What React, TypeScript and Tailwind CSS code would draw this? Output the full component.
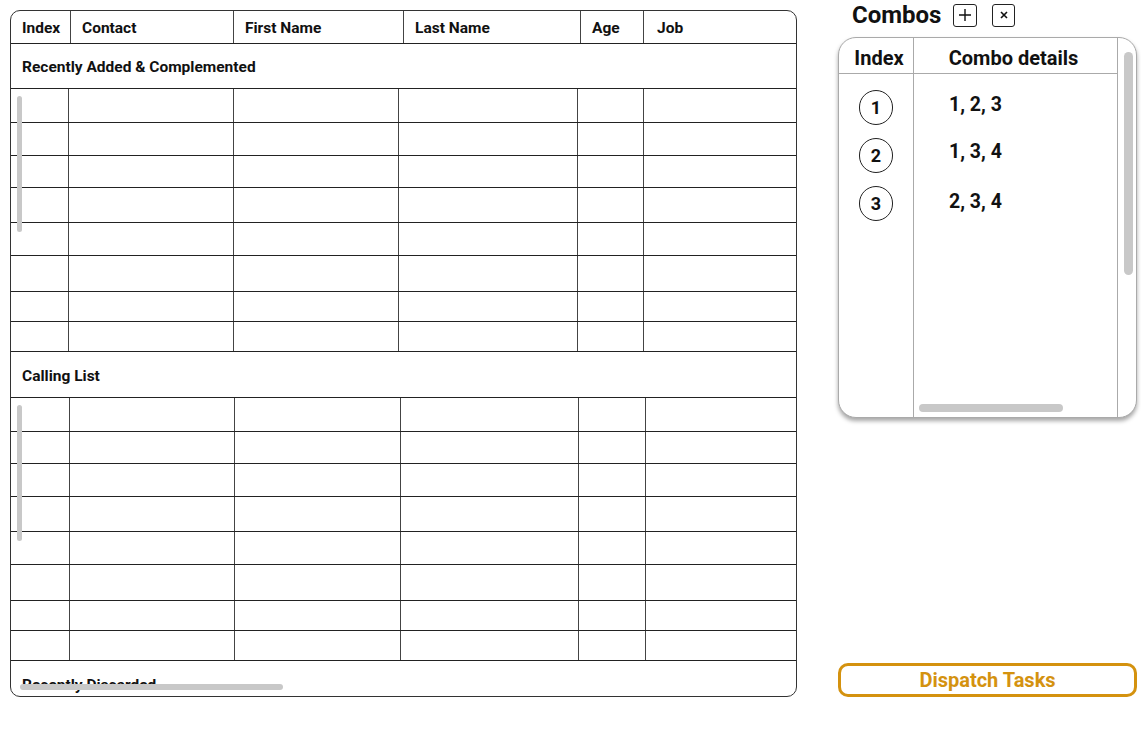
import React from 'react';

const headerCols = [
  { label: 'Index', w: 'w-[60px]' },
  { label: 'Contact', w: 'w-[163px]' },
  { label: 'First Name', w: 'w-[170px]' },
  { label: 'Last Name', w: 'w-[177px]' },
  { label: 'Age', w: 'w-[63px]' },
];

const sectionOneCols = ['w-[58px]', 'w-[165px]', 'w-[165px]', 'w-[179px]', 'w-[66px]'];
const sectionTwoCols = ['w-[59px]', 'w-[165px]', 'w-[166px]', 'w-[178px]', 'w-[67px]'];

const sectionOneRows = ['h-[34px]', 'h-[33px]', 'h-[32px]', 'h-[35px]', 'h-[33px]', 'h-[36px]', 'h-[30px]', 'h-[30px]'];
const sectionTwoRows = ['h-[34px]', 'h-[32px]', 'h-[33px]', 'h-[35px]', 'h-[33px]', 'h-[36px]', 'h-[30px]', 'h-[30px]'];

const combos = [
  { id: 1, items: '1, 2, 3', gap: 'mt-0' },
  { id: 2, items: '1, 3, 4', gap: 'mt-[26px]' },
  { id: 3, items: '2, 3, 4', gap: 'mt-[29px]' },
];

function SectionLabel({ title, height }: { title: string; height: string }) {
  return (
    <div className={`${height} shrink-0 flex items-center pl-[11px] pt-[4px] border-b border-[#222] text-[15.5px] font-bold text-[#111]`}>
      {title}
    </div>
  );
}

function SectionBody({ cols, rows }: { cols: string[]; rows: string[] }) {
  return (
    <div className="relative shrink-0">
      {rows.map((h, r) => (
        <div key={r} className={`${h} flex border-b border-[#222]`}>
          {cols.map((w, c) => (
            <div key={c} className={`${w} shrink-0 border-r border-[#444]`} />
          ))}
          <div className="flex-1" />
        </div>
      ))}
      <div className="absolute left-[6px] top-[7px] w-[5px] h-[136px] rounded-full bg-[#c8c8c8]" />
    </div>
  );
}

export default function App() {
  return (
    <div className="w-[1141px] h-[737px] bg-white flex font-['Roboto',sans-serif] text-[#111]">
      {/* contacts table */}
      <div className="relative ml-[10px] mt-[10px] w-[787px] h-[687px] rounded-[10px] border border-[#333] overflow-hidden flex flex-col">
        <div className="h-[33px] shrink-0 flex border-b border-[#222] text-[15.5px] font-bold">
          {headerCols.map((col) => (
            <div key={col.label} className={`${col.w} shrink-0 flex items-center pl-[11px] pt-[3px] border-r border-[#444]`}>
              {col.label}
            </div>
          ))}
          <div className="flex-1 flex items-center pl-[13px] pt-[3px]">Job</div>
        </div>

        <SectionLabel title="Recently Added & Complemented" height="h-[45px]" />
        <SectionBody cols={sectionOneCols} rows={sectionOneRows} />

        <SectionLabel title="Calling List" height="h-[46px]" />
        <SectionBody cols={sectionTwoCols} rows={sectionTwoRows} />

        <div className="shrink-0 h-[45px] flex items-center pl-[11px] pt-[4px] text-[15.5px] font-bold">Recently Discarded</div>

        <div className="absolute left-[9px] bottom-[6px] w-[263px] h-[6px] rounded-full bg-[#c8c8c8]" />
      </div>

      {/* combos */}
      <div className="ml-[41px] w-[299px] h-[697px] flex flex-col">
        <div className="h-[30px] flex items-center pl-[14px]">
          <span className="text-[24px] font-bold leading-none">Combos</span>
          <button className="ml-[12px] w-[24px] h-[23px] border border-[#222] rounded-[3px] flex items-center justify-center">
            <svg width="14" height="14" viewBox="0 0 14 14" fill="none" stroke="#111" strokeWidth="1.4">
              <path d="M7 1v12M1 7h12" />
            </svg>
          </button>
          <button className="ml-[15px] w-[23px] h-[23px] border border-[#222] rounded-[3px] flex items-center justify-center">
            <svg width="10" height="10" viewBox="0 0 10 10" fill="none" stroke="#111" strokeWidth="1.6">
              <path d="M2 2l6 6M8 2l-6 6" />
            </svg>
          </button>
        </div>

        <div className="relative mt-[7px] h-[381px] rounded-[18px] border border-[#aaa] bg-white shadow-[0_3px_4px_rgba(0,0,0,0.35)] overflow-hidden flex">
          <div className="w-[279px] shrink-0 flex flex-col border-r border-[#aaa]">
            <div className="h-[36px] shrink-0 flex border-b border-[#aaa] text-[20px] font-bold">
              <div className="w-[75px] shrink-0 flex items-center justify-center pt-[4px] pl-[6px] border-r border-[#aaa]">Index</div>
              <div className="flex-1 flex items-center justify-center pt-[4px] pr-[4px]">Combo details</div>
            </div>
            <div className="flex-1 flex">
              <div className="w-[75px] shrink-0 border-r border-[#aaa] flex flex-col items-center pt-[16px] gap-[13px]">
                {combos.map((c) => (
                  <div key={c.id} className="w-[34px] h-[35px] rounded-full border border-[#222] flex items-center justify-center text-[18px] font-bold">
                    {c.id}
                  </div>
                ))}
              </div>
              <div className="flex-1 flex flex-col pl-[35px] pt-[20px]">
                {combos.map((c) => (
                  <div key={c.id} className={`${c.gap} h-[21px] leading-[21px] text-[19.5px] font-bold`}>{c.items}</div>
                ))}
              </div>
            </div>
          </div>
          <div className="relative flex-1">
            <div className="absolute left-[6px] top-[14px] w-[9px] h-[223px] rounded-full bg-[#c8c8c8]" />
          </div>
          <div className="absolute left-[80px] top-[366px] w-[144px] h-[8px] rounded-full bg-[#c8c8c8]" />
        </div>

        <button className="mt-auto h-[34px] w-full rounded-[10px] border-[3px] border-[#d4920f] text-[20px] font-bold text-[#d4920f] flex items-center justify-center">
          Dispatch Tasks
        </button>
      </div>
    </div>
  );
}
